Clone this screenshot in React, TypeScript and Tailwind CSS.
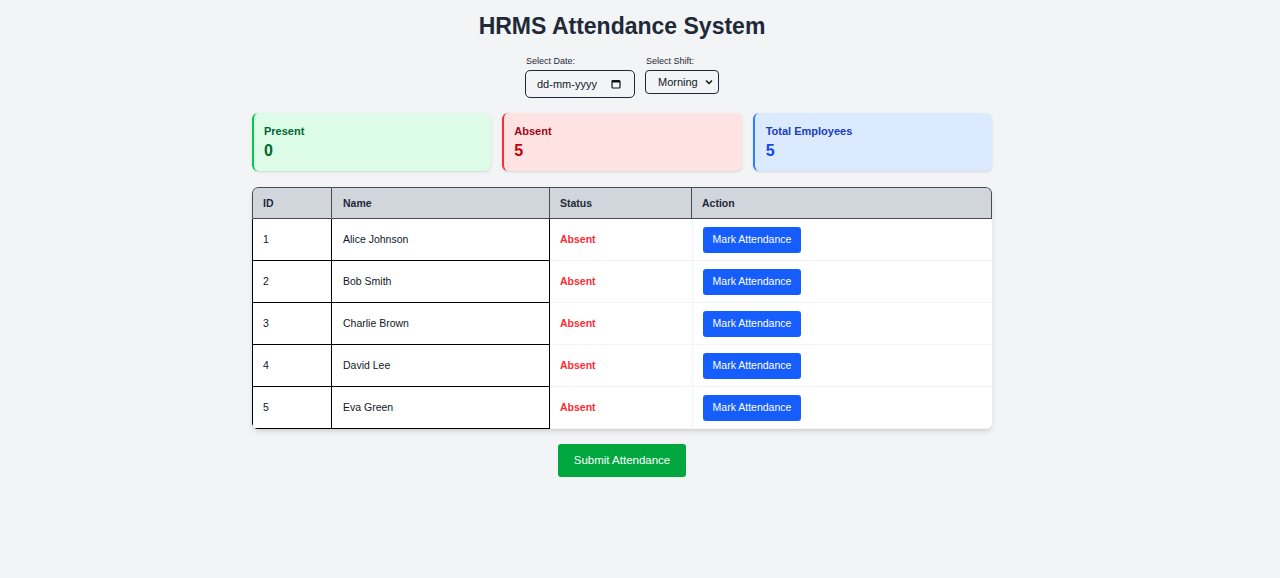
import React from "react";

const employees = [
  { id: 1, name: "Alice Johnson" },
  { id: 2, name: "Bob Smith" },
  { id: 3, name: "Charlie Brown" },
  { id: 4, name: "David Lee" },
  { id: 5, name: "Eva Green" },
];

const App = () => {
  return (
    <div className="min-h-screen bg-[#f3f4f6] pr-[36px] pt-[12px] flex flex-col items-center font-['Liberation_Sans',Arial,sans-serif]">
      {/* Title */}
      <h1 className="text-[23px] leading-[28px] font-bold text-[#1e2939]">
        HRMS Attendance System
      </h1>

      {/* Filters */}
      <div className="mt-[16px] flex gap-[10px] items-start">
        <div className="flex flex-col">
          <label className="text-[9px] leading-[11px] text-gray-800 mb-[3px] ml-[1px]">
            Select Date:
          </label>
          <div className="w-[110px] h-[28px] border border-gray-800 rounded-[5px] bg-transparent flex items-center justify-between pl-[11px] pr-[13px] text-[11px] text-gray-900">
            <span>dd-mm-yyyy</span>
            <svg width="10" height="10" viewBox="0 0 10 10">
              <rect x="1" y="1.5" width="8" height="7.5" rx="1" fill="none" stroke="#111" strokeWidth="1.2" />
              <rect x="1" y="1.5" width="8" height="2" fill="#111" />
            </svg>
          </div>
        </div>
        <div className="flex flex-col">
          <label className="text-[9px] leading-[11px] text-gray-800 mb-[3px] ml-[1px]">
            Select Shift:
          </label>
          <div className="w-[74px] h-[24px] border border-gray-800 rounded-[4px] flex items-center justify-between pl-[12px] pr-[5px] text-[11px] text-gray-900">
            <span>Morning</span>
            <svg width="8" height="6" viewBox="0 0 8 6">
              <path d="M1 1.5 L4 4.5 L7 1.5" fill="none" stroke="#111" strokeWidth="1.5" />
            </svg>
          </div>
        </div>
      </div>

      {/* Summary cards */}
      <div className="mt-[15px] w-[740px] grid grid-cols-3 gap-[11px]">
        <div className="h-[58px] rounded-md border-l-2 border-[#00c950] bg-[#dcfce7] shadow-sm pl-[10px] pt-[12px]">
          <p className="text-[11px] leading-[13px] font-bold text-[#016630]">Present</p>
          <p className="text-[16px] leading-[20px] font-bold text-[#016630] mt-[3px]">0</p>
        </div>
        <div className="h-[58px] rounded-md border-l-2 border-[#fb2c36] bg-[#ffe2e2] shadow-sm pl-[10px] pt-[12px]">
          <p className="text-[11px] leading-[13px] font-bold text-[#9f0712]">Absent</p>
          <p className="text-[16px] leading-[20px] font-bold text-[#c10007] mt-[3px]">5</p>
        </div>
        <div className="h-[58px] rounded-md border-l-2 border-[#2b7fff] bg-[#dbeafe] shadow-sm pl-[11px] pt-[12px]">
          <p className="text-[11px] leading-[13px] font-bold text-[#193cb8]">Total Employees</p>
          <p className="text-[16px] leading-[20px] font-bold text-[#1447e6] mt-[3px]">5</p>
        </div>
      </div>

      {/* Table */}
      <div className="mt-[16px] w-[740px] rounded-md bg-white shadow-md overflow-hidden">
        <table className="w-full table-fixed border-separate border-spacing-0 text-left">
          <colgroup>
            <col className="w-[80px]" />
            <col className="w-[218px]" />
            <col className="w-[142px]" />
            <col />
          </colgroup>
          <thead>
            <tr className="bg-[#d1d5dc] h-[32px]">
              <th className="px-[10px] pt-[2px] text-[10.5px] font-bold text-gray-800 border border-[#4a4a4a] rounded-tl-md">ID</th>
              <th className="px-[11px] pt-[2px] text-[10.5px] font-bold text-gray-800 border-y border-r border-[#4a4a4a]">Name</th>
              <th className="px-[10px] pt-[2px] text-[10.5px] font-bold text-gray-800 border-y border-r border-[#4a4a4a]">Status</th>
              <th className="px-[10px] pt-[2px] text-[10.5px] font-bold text-gray-800 border-y border-r border-[#4a4a4a] rounded-tr-md">Action</th>
            </tr>
          </thead>
          <tbody>
            {employees.map((e) => (
              <tr key={e.id} className="h-[42px]">
                <td className="px-[10px] text-[10.5px] text-gray-900 border-l border-b border-r border-black">{e.id}</td>
                <td className="px-[11px] text-[10.5px] text-gray-900 border-b border-r border-black">{e.name}</td>
                <td className="px-[10px] text-[10.5px] font-bold text-[#fb2c36] border-b border-gray-100">Absent</td>
                <td className="px-[10px] border-l border-b border-gray-100">
                  <button className="w-[98px] h-[26px] rounded-[3px] bg-[#155dfc] text-white text-[10.5px]">
                    Mark Attendance
                  </button>
                </td>
              </tr>
            ))}
          </tbody>
        </table>
      </div>

      {/* Submit */}
      <button className="mt-[15px] w-[128px] h-[33px] rounded-[3px] bg-[#00a63e] text-white text-[11.5px]">
        Submit Attendance
      </button>
    </div>
  );
};

export default App;
